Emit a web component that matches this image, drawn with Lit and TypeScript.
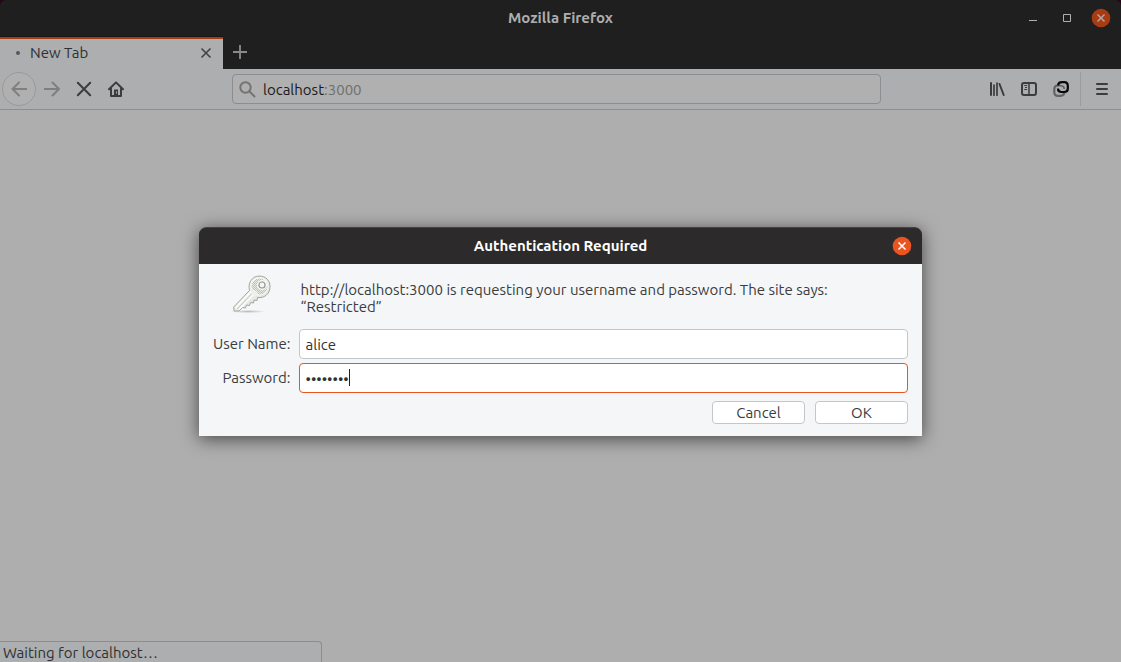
import { LitElement, html, css, svg } from "lit";
import { customElement } from "lit/decorators.js";

const cross = svg`<path d="M-3.5 -3.5 L3.5 3.5 M3.5 -3.5 L-3.5 3.5" fill="none" stroke="currentColor" stroke-width="1.5"/>`;

@customElement("browser-chrome")
export class BrowserChrome extends LitElement {
  static styles = css`
    :host { display: block; }
    button { border: 0; padding: 0; background: none; color: inherit; font: inherit; display: grid; place-items: center; }
    svg { display: block; }
    .top { background: #1f1f1f; border-radius: 6px 6px 0 0; }
    .titlebar { display: grid; grid-template-columns: 1fr auto 1fr; align-items: center; height: 36px; color: #aeaeae; }
    .title { grid-column: 2; font-size: 15px; font-weight: 700; }
    .controls { display: flex; justify-content: flex-end; padding-right: 3px; }
    .controls button { width: 34px; height: 36px; }
    .strip { display: flex; align-items: flex-end; height: 33px; }
    .tab { display: flex; align-items: center; box-sizing: border-box; width: 223px; height: 32px; padding: 0 9px 2px 16px; background: #acaeb0; border-top: 2px solid #a93b13; box-shadow: 0 -1px #171717; color: #303030; }
    .dot { width: 4px; height: 4px; border-radius: 50%; background: #56585a; margin-right: 10px; }
    .tab-label { flex: 1; }
    .tab-close { width: 16px; height: 20px; color: #404244; }
    .new-tab { width: 34px; height: 33px; padding-bottom: 2px; color: #8b8b8b; }
    .toolbar { display: flex; align-items: center; height: 40px; padding: 0 3px; background: #acaeb0; border-bottom: 1px solid #8c8f92; color: #3b3c3d; }
    .toolbar button { width: 32px; height: 32px; flex: none; }
    .toolbar .back { box-sizing: border-box; width: 34px; height: 34px; border: 1px solid #989a9b; border-radius: 50%; background: #b0b0b1; color: #7d7f80; margin: 0 0 0 -1px; }
    .toolbar .forward { color: #7d7f80; }
    .url { display: flex; align-items: center; flex: 1; box-sizing: border-box; height: 30px; margin: 0 100px; padding: 0 6px; gap: 7px; background: #b0b0b0; border: 1px solid #8b8d91; border-radius: 4px; color: #1a1a1a; }
    .address { padding-top: 2px; }
    .port { color: #6e6e6e; }
    .sep { width: 1px; height: 34px; background: #999b9d; margin: 0 5px 0 3px; }
  `;

  render() {
    return html`
      <div class="top">
        <div class="titlebar">
          <span class="title">Mozilla Firefox</span>
          <div class="controls">
            <button aria-label="Minimize"><svg width="20" height="20"><path d="M6 12.5h8" stroke="#b0b0b0"/></svg></button>
            <button aria-label="Maximize"><svg width="20" height="20"><path d="M6.5 6.5h7v7h-7z" fill="none" stroke="#b0b0b0"/></svg></button>
            <button aria-label="Close"><svg width="20" height="20" viewBox="-10 -10 20 20" color="#b0a8a4"><circle r="9.3" fill="#a93b13"/>${cross}</svg></button>
          </div>
        </div>
        <div class="strip">
          <div class="tab">
            <span class="dot"></span><span class="tab-label">New Tab</span>
            <button class="tab-close" aria-label="Close tab"><svg width="12" height="12"><path d="M1.5 1.5l9 9m0-9l-9 9" stroke="currentColor" stroke-width="1.6"/></svg></button>
          </div>
          <button class="new-tab" aria-label="New tab"><svg width="14" height="14"><path d="M7 0v14M0 7h14" stroke="currentColor" stroke-width="1.800"/></svg></button>
        </div>
      </div>
      <div class="toolbar">
        <button class="back" aria-label="Back"><svg width="16" height="16"><path d="M15.5 8H1.5M8 1.5L1.5 8L8 14.5" fill="none" stroke="currentColor" stroke-width="2" stroke-linejoin="round" stroke-linecap="round"/></svg></button>
        <button class="forward" aria-label="Forward"><svg width="16" height="16"><path d="M.8 8h14M8.5 1.5L15 8l-6.500 6.500" fill="none" stroke="currentColor" stroke-width="2" stroke-linejoin="round" stroke-linecap="round"/></svg></button>
        <button aria-label="Stop"><svg width="16" height="16"><path d="M1.800 1.800l12.400 12.400m0-12.400L1.800 14.200" stroke="currentColor" stroke-width="2" stroke-linecap="round"/></svg></button>
        <button aria-label="Home"><svg width="16" height="16"><path d="M1 8.200L8 1.400l7 6.800M3 7.500v7.500h10V7.500" fill="none" stroke="currentColor" stroke-width="2" stroke-linejoin="round" stroke-linecap="round"/><path d="M6 8.500h4V15H6z" fill="currentColor"/><path d="M8 10.500h1v2H8z" fill="#acaeb0"/></svg></button>
        <div class="url">
          <svg width="17" height="17" fill="none" stroke="#737474" stroke-width="2" stroke-linecap="round"><circle cx="6.500" cy="6.500" r="5.200"/><path d="M10.500 10.500l5 5"/></svg>
          <span class="address">localhost<span class="port">:3000</span></span>
        </div>
        <button aria-label="Library"><svg width="16" height="16" fill="none" stroke="currentColor" stroke-width="2" stroke-linecap="round"><path d="M2 2v12M10.500 3l4.200 11"/><path d="M5 4v10.200M8 2v12.200" stroke-width="1.700"/></svg></button>
        <button aria-label="Sidebars"><svg width="16" height="16" fill="none" stroke="currentColor"><rect x="1" y="2" width="14" height="12" rx="2" stroke-width="2"/><path d="M8 3v10" stroke-width="1.500"/><path d="M3.200 4.500h3M4 6.500h2M3.200 8.500h3"/></svg></button>
        <button aria-label="Containers"><svg width="16" height="16" fill="none" stroke-width="2.200"><path d="M4.500 4.700Q1.300 4.700 1.300 8v3.200Q1.300 14.800 5 14.800h2.500Q11.200 14.800 11.200 11.500" stroke="#626365"/><path d="M4.500 4.700H7.500Q11.200 5 11.200 8" stroke="#626365" stroke-width="1.700"/><path d="M5 4.500Q5.300 1.200 9 1.200h2.200Q14.800 1.200 14.800 5v2.500Q14.800 11 11.200 11H8.500Q5 11 5 7.500" stroke="#080808"/></svg></button>
        <span class="sep"></span>
        <button aria-label="Menu"><svg width="16" height="16"><path d="M3 3h10M3 8h10M3 13h10" stroke="currentColor" stroke-width="2" stroke-linecap="round"/></svg></button>
      </div>
    `;
  }
}

@customElement("auth-dialog")
export class AuthDialog extends LitElement {
  static styles = css`
    :host { display: block; border-radius: 7px 7px 0 0; background: #f4f6f8; color: #3a3c3e; box-shadow: 0 3px 18px rgba(0, 0, 0, 0.6); }
    svg { display: block; }
    .head { display: grid; grid-template-columns: 1fr auto 1fr; align-items: center; box-sizing: border-box; height: 37px; padding: 0 10px; background: #2c2a2a; border-top: 1px solid #454343; border-radius: 7px 7px 0 0; color: #fff; }
    .title { grid-column: 2; margin: 0; font-size: 15px; font-weight: 700; }
    .close { justify-self: end; padding: 0; border: 0; background: none; color: #fff; }
    .body { display: grid; grid-template-columns: auto 1fr; column-gap: 8px; row-gap: 4px; padding: 10px 14px 12px; align-items: center; }
    .key { justify-self: center; align-self: start; }
    .message { margin: 0; padding: 0 0 2px 2px; line-height: 17px; }
    .message-row { min-height: 51px; display: flex; align-items: center; }
    .label { text-align: right; }
    .field { display: flex; align-items: center; box-sizing: border-box; height: 30px; padding: 0 6px; background: #fff; border: 1px solid #c3c7cb; border-radius: 4px; }
    .field.active { border-color: #e95420; }
    input { min-width: 0; padding: 0; border: 0; outline: 0; background: none; font: inherit; color: #303234; }
    .text { flex: 1; padding-top: 2px; }
    .secret { field-sizing: content; max-width: 100%; padding-top: 2px; caret-color: transparent; }
    .caret { width: 1px; height: 17px; background: #202020; }
    .actions { grid-column: 1 / -1; display: flex; justify-content: flex-end; gap: 10px; margin-top: 4px; }
    .actions button { box-sizing: border-box; width: 93px; height: 23px; padding: 0; background: #fff; border: 1px solid #c3c7cb; border-radius: 4px; color: inherit; font: inherit; line-height: 21px; }
  `;

  render() {
    return html`
      <div class="head">
        <h1 class="title">Authentication Required</h1>
        <button class="close" aria-label="Close"><svg width="20" height="20" viewBox="-10 -10 20 20"><circle r="9.300" fill="#e95420"/>${cross}</svg></button>
      </div>
      <form class="body" @submit=${(e: Event) => e.preventDefault()}>
        <svg class="key" width="42" height="42" viewBox="0 0 42 42">
          <defs>
            <linearGradient id="metal" x1="0" y1="0" x2="1" y2="1"><stop offset="0" stop-color="#f6f7f4"/><stop offset="1" stop-color="#dcdfd8"/></linearGradient>
            <radialGradient id="shade"><stop offset="0" stop-color="#8b8e88" stop-opacity=".55"/><stop offset="1" stop-color="#8b8e88" stop-opacity="0"/></radialGradient>
            <pattern id="grip" width="2" height="2" patternUnits="userSpaceOnUse"><path d="M0 0h1v1H0zM1 1h1v1H1z" fill="#c0c3bc"/></pattern>
          </defs>
          <ellipse cx="17" cy="37.500" rx="18" ry="1.600" fill="url(#shade)"/>
          <path d="M18.500 16.500C16.500 9 21 2.300 28 2.100C35 1.800 39.500 7 39 13.500C38.500 20 33.500 24.500 26.500 23.500L26 26.500L23 26L22.500 29L19.500 28.500L18.500 31.500L15.500 31L14.500 34L11.500 33.500L8 37H3L2.700 33Z" fill="url(#metal)" stroke="#a3a69e" stroke-linejoin="round"/>
          <path d="M20 17.500L4.500 34M22.500 20.500L8 35.500" stroke="#fff" stroke-width="1.300"/>
          <path d="M21 19.500L6 35" stroke="#c0c3bc" stroke-width=".8"/>
          <circle cx="28.500" cy="12.500" r="9" fill="#fafbf8"/>
          <circle cx="28.500" cy="12.500" r="8" fill="#e5e7e1"/>
          <circle cx="28.500" cy="12.500" r="8" fill="url(#grip)"/>
          <path d="M20.500 15.500q5 0 7.500 5.500l-4 1.500l-4-3z" fill="#eef0eb"/>
          <circle cx="31" cy="11" r="4.300" fill="none" stroke="#f7f8f5" stroke-width="1.500"/>
          <circle cx="31" cy="11" r="3" fill="#f4f6f8" stroke="#999c94" stroke-width="1.200"/>
        </svg>
        <div class="message-row"><p class="message">http://localhost:3000 is requesting your username and password. The site says:<br />“Restricted”</p></div>
        <label class="label" for="user">User Name:</label>
        <div class="field"><input class="text" id="user" type="text" value="alice" /></div>
        <label class="label" for="pass">Password:</label>
        <div class="field active"><input class="secret" id="pass" type="password" value="password" /><span class="caret"></span></div>
        <div class="actions"><button type="button">Cancel</button><button type="submit">OK</button></div>
      </form>
    `;
  }
}

@customElement("app-root")
export class AppRoot extends LitElement {
  static styles = css`
    :host { display: block; background: #250519; font: 15px/20px Ubuntu, "Noto Sans", sans-serif; }
    .window { position: relative; display: flex; flex-direction: column; min-height: 100vh; }
    .page { flex: 1; display: flex; align-items: flex-end; background: #aeaeae; }
    .status { box-sizing: border-box; width: 322px; height: 21px; padding-left: 3px; background: #acaeb0; border: solid #8b8d90; border-width: 1px 1px 0 0; border-radius: 0 4px 0 0; color: #303132; line-height: 22px; }
    .overlay { position: absolute; inset: 0; display: grid; place-items: center; }
    .dialog { width: min(723px, 100%); }
  `;

  render() {
    return html`
      <div class="window">
        <browser-chrome></browser-chrome>
        <main class="page"><div class="status">Waiting for localhost…</div></main>
        <div class="overlay"><auth-dialog class="dialog"></auth-dialog></div>
      </div>
    `;
  }
}
